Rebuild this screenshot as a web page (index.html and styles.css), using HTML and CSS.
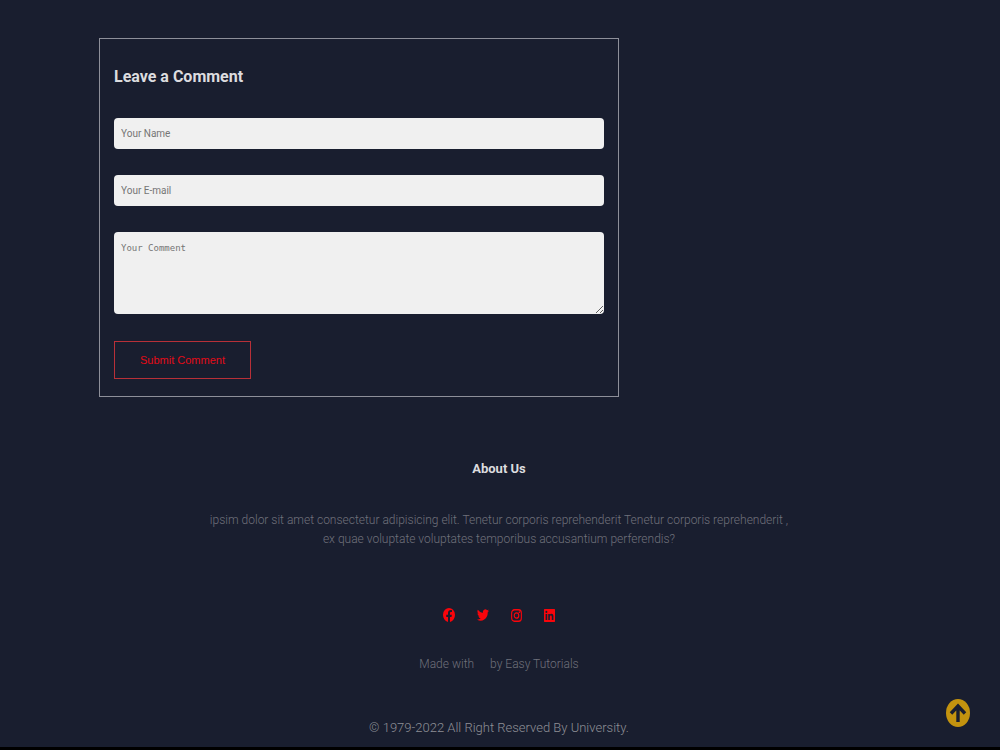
FILE: index.html
```html
<!DOCTYPE html>
<html lang="en">
<head>
<meta charset="utf-8">
<meta name="viewport" content="width=device-width, initial-scale=1">
<title>University</title>
<link rel="stylesheet" href="styles.css">
</head>
<body>
<main class="content">
  <section class="comment-box">
    <h3 class="comment-title">Leave a Comment</h3>
    <form class="comment-form">
      <input class="field" type="text" placeholder="Your Name" aria-label="Your Name">
      <input class="field" type="email" placeholder="Your E-mail" aria-label="Your E-mail">
      <textarea class="field field-area" placeholder="Your Comment" aria-label="Your Comment"></textarea>
      <button class="submit" type="submit">Submit Comment</button>
    </form>
  </section>
</main>
<footer class="footer">
  <h4 class="footer-title">About Us</h4>
  <p class="about">ipsim dolor sit amet consectetur adipisicing elit. Tenetur corporis reprehenderit Tenetur corporis reprehenderit ,<br>ex quae voluptate voluptates temporibus accusantium perferendis?</p>
  <nav class="social" aria-label="Social links">
    <a class="social-link" href="#" aria-label="Facebook"><svg class="icon" viewBox="0 0 24 28" preserveAspectRatio="none"><path fill-rule="evenodd" d="M12 0a12 14 0 0 1 2 27.800V18h3l.8-4.500H14v-3c0-1.500.6-2.400 2.200-2.400H18V4.400c-5-.9-8 1.200-8 5.600v3.500H6.500V18H10v9.800A12 14 0 0 1 12 0z"/></svg></a>
    <a class="social-link" href="#" aria-label="Twitter"><svg class="icon" viewBox="0 0 24 24" preserveAspectRatio="none"><path d="M24 4.600a10 10 0 0 1-2.800.8 5 5 0 0 0 2.100-2.700 10 10 0 0 1-3.100 1.200 4.900 4.900 0 0 0-8.400 4.500A14 14 0 0 1 1.700 3.100a4.900 4.900 0 0 0 1.500 6.600A5 5 0 0 1 1 9.100a4.900 4.900 0 0 0 3.900 4.900 5 5 0 0 1-2.200.1 4.900 4.900 0 0 0 4.600 3.400A10 10 0 0 1 0 19.500a14 14 0 0 0 21.500-12.400A10 10 0 0 0 24 4.600z"/></svg></a>
    <a class="social-link" href="#" aria-label="Instagram"><svg class="icon icon-small" viewBox="0 0 24 24" preserveAspectRatio="none"><rect x="1.400" y="1.400" width="21.200" height="21.200" rx="6" fill="none" stroke="currentColor" stroke-width="2.400"/><circle cx="12" cy="12" r="5" fill="none" stroke="currentColor" stroke-width="2.400"/><circle cx="18.200" cy="5.800" r="1.600"/></svg></a>
    <a class="social-link" href="#" aria-label="LinkedIn"><svg class="icon icon-small" viewBox="0 0 24 24" preserveAspectRatio="none"><path fill-rule="evenodd" d="M1 0h22l1 1v22l-1 1H1l-1-1V1zM3.500 9v11.500H7V9zM5.200 3.300a2.100 2.100 0 1 0 .1 4.200 2.100 2.100 0 0 0-.1-4.200zM9.300 9v11.500h3.500v-5.700c0-3.500 4.200-3.700 4.200 0v5.700h3.500v-7c0-5.400-5.800-5.600-7.700-2.800V9z"/></svg></a>
  </nav>
  <p class="credit"><span>Made with</span><span>by Easy Tutorials</span></p>
  <p class="copyright">© 1979-2022 All Right Reserved By University.</p>
</footer>
<a class="to-top" href="#" aria-label="Back to top"><svg class="to-top-icon" viewBox="0 0 24 28" preserveAspectRatio="none"><ellipse cx="12" cy="14" rx="12" ry="14" fill="#c3930f"/><path d="M12 23V7M5 14.500 12 7l7 7.500" fill="none" stroke="#191e2f" stroke-width="3.400"/></svg></a>
</body>
</html>
```
FILE: styles.css
```css
* {
  box-sizing: border-box;
  margin: 0;
  padding: 0;
}

body {
  min-height: 100vh;
  padding-right: 2px;
  border-bottom: 3px solid #000;
  background: #191e2f;
  font-family: Roboto, "Liberation Sans", sans-serif;
}

.content {
  max-width: 1200px;
  margin: 0 auto;
  padding: 38px 99px 0;
}

.comment-box {
  width: 65%;
  min-width: 280px;
  padding: 26px 14px 17px;
  border: 1px solid #8d8f99;
}

.comment-title {
  margin-bottom: 30px;
  color: #dcdcdf;
  font-size: 16px;
  font-weight: 700;
  line-height: 23px;
}

.comment-form {
  display: flex;
  flex-direction: column;
  align-items: flex-start;
  gap: 26px;
}

.field {
  width: 100%;
  height: 31px;
  padding: 0 7px;
  border: 0;
  border-radius: 4px;
  background: #f0f0f0;
  color: #222;
  font-family: Roboto, sans-serif;
  font-size: 10px;
}

.field::placeholder {
  color: #757575;
}

.field-area {
  height: 82px;
  padding: 10px 7px;
  font-family: "DejaVu Sans Mono", monospace;
  font-size: 9px;
  line-height: 12px;
  resize: both;
}

.submit {
  height: 38px;
  margin-top: 1px;
  padding: 0 25px;
  border: 1px solid #b83038;
  background: transparent;
  color: #e30b17;
  font-family: "Liberation Sans", Arial, sans-serif;
  font-size: 11px;
  cursor: pointer;
}

.footer {
  display: flex;
  flex-direction: column;
  align-items: center;
  padding: 62px 16px 9px;
  color: #70717b;
  font-size: 12px;
  font-weight: 300;
  line-height: 19px;
  text-align: center;
}

.footer-title {
  margin-bottom: 32px;
  color: #dcdcdf;
  font-size: 13px;
  font-weight: 700;
  line-height: 20px;
}

.about {
  margin-bottom: 59px;
}

.social {
  display: flex;
  align-items: center;
  gap: 22px;
  margin-bottom: 33px;
}

.social-link {
  display: flex;
  color: #f9050b;
}

.icon {
  width: 12px;
  height: 14px;
  fill: currentColor;
}

.icon-small {
  width: 11px;
  height: 13px;
}

.credit {
  display: flex;
  gap: 16px;
  margin-bottom: 44px;
}

.copyright {
  color: #8e8f96;
  font-size: 13px;
  line-height: 20px;
}

.to-top {
  position: fixed;
  right: 30px;
  bottom: 23px;
  display: flex;
}

.to-top-icon {
  width: 24px;
  height: 28px;
}
```
